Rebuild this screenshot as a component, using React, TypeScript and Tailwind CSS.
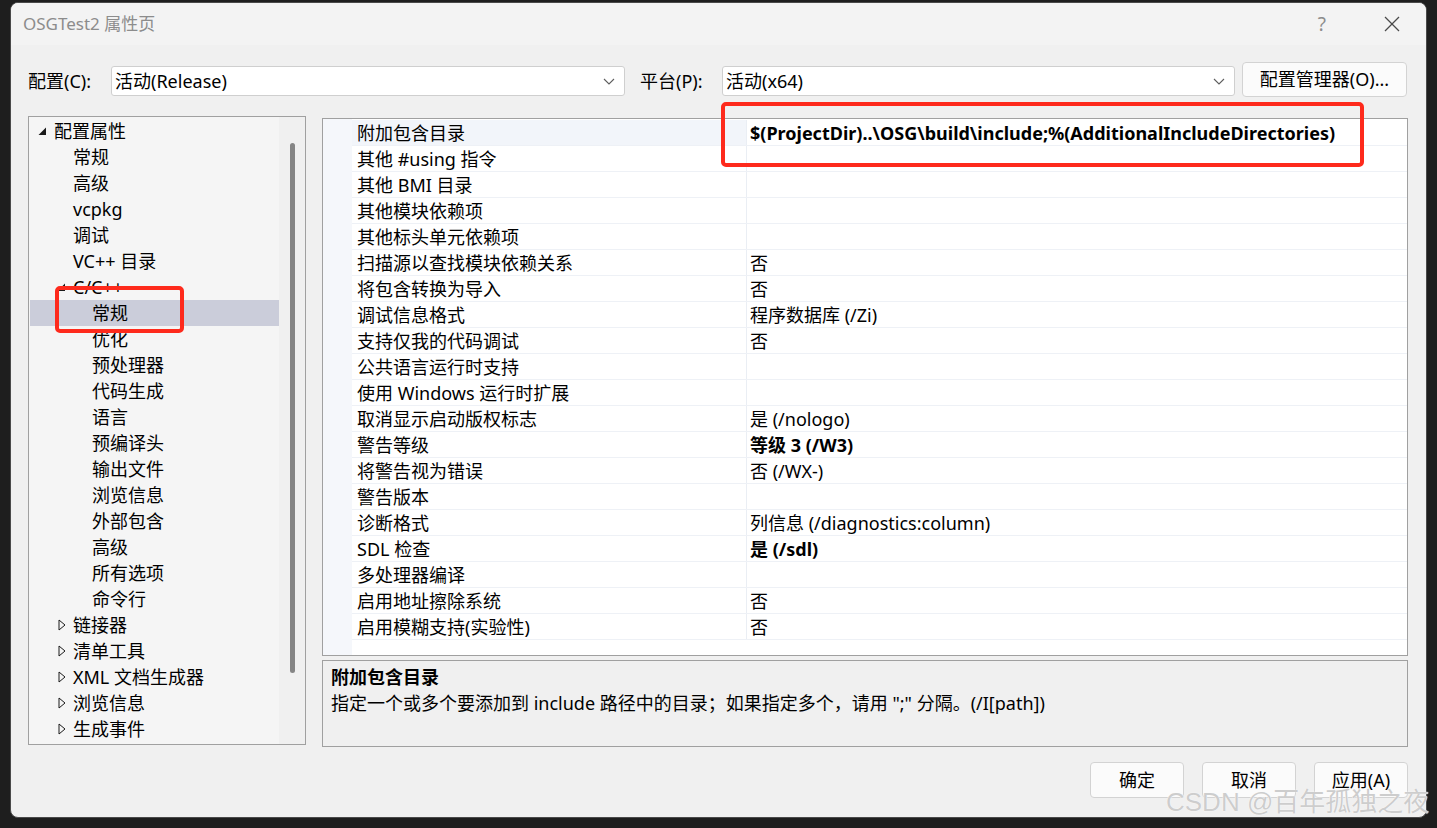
import React from "react";

type TreeItem = { label: string; level: number; arrow?: "open" | "closed"; selected?: boolean };

const tree: TreeItem[] = [
  { label: "配置属性", level: 0, arrow: "open" },
  { label: "常规", level: 1 },
  { label: "高级", level: 1 },
  { label: "vcpkg", level: 1 },
  { label: "调试", level: 1 },
  { label: "VC++ 目录", level: 1 },
  { label: "C/C++", level: 1, arrow: "open" },
  { label: "常规", level: 2, selected: true },
  { label: "优化", level: 2 },
  { label: "预处理器", level: 2 },
  { label: "代码生成", level: 2 },
  { label: "语言", level: 2 },
  { label: "预编译头", level: 2 },
  { label: "输出文件", level: 2 },
  { label: "浏览信息", level: 2 },
  { label: "外部包含", level: 2 },
  { label: "高级", level: 2 },
  { label: "所有选项", level: 2 },
  { label: "命令行", level: 2 },
  { label: "链接器", level: 1, arrow: "closed" },
  { label: "清单工具", level: 1, arrow: "closed" },
  { label: "XML 文档生成器", level: 1, arrow: "closed" },
  { label: "浏览信息", level: 1, arrow: "closed" },
  { label: "生成事件", level: 1, arrow: "closed" },
];

const props: { name: string; value: string; bold?: boolean }[] = [
  { name: "附加包含目录", value: "$(ProjectDir)..\\OSG\\build\\include;%(AdditionalIncludeDirectories)", bold: true },
  { name: "其他 #using 指令", value: "" },
  { name: "其他 BMI 目录", value: "" },
  { name: "其他模块依赖项", value: "" },
  { name: "其他标头单元依赖项", value: "" },
  { name: "扫描源以查找模块依赖关系", value: "否" },
  { name: "将包含转换为导入", value: "否" },
  { name: "调试信息格式", value: "程序数据库 (/Zi)" },
  { name: "支持仅我的代码调试", value: "否" },
  { name: "公共语言运行时支持", value: "" },
  { name: "使用 Windows 运行时扩展", value: "" },
  { name: "取消显示启动版权标志", value: "是 (/nologo)" },
  { name: "警告等级", value: "等级 3 (/W3)", bold: true },
  { name: "将警告视为错误", value: "否 (/WX-)" },
  { name: "警告版本", value: "" },
  { name: "诊断格式", value: "列信息 (/diagnostics:column)" },
  { name: "SDL 检查", value: "是 (/sdl)", bold: true },
  { name: "多处理器编译", value: "" },
  { name: "启用地址擦除系统", value: "否" },
  { name: "启用模糊支持(实验性)", value: "否" },
];

const indent = ["pl-[7px]", "pl-[26px]", "pl-[45px]"];

function Chevron() {
  return (
    <svg width="12" height="7" viewBox="0 0 12 7" className="shrink-0">
      <polyline points="1,1 6,6 11,1" fill="none" stroke="#5f5f5f" strokeWidth="1.1" />
    </svg>
  );
}

function Select({ value, w }: { value: string; w: string }) {
  return (
    <div className={`${w} h-[30px] mt-[4px] bg-white border border-[#cfcfcf] rounded-[3px] flex items-center pl-[3px] pr-[9px]`}>
      <span className="flex-1 leading-[28px]">{value}</span>
      <Chevron />
    </div>
  );
}

function Btn({ label, w, h }: { label: string; w: string; h: string }) {
  return (
    <div className={`${w} ${h} bg-[#fbfbfb] border border-[#d3d3d3] rounded-[4px] flex items-center justify-center`}>
      {label}
    </div>
  );
}

export default function App() {
  return (
    <div className="relative w-[1437px] h-[828px] overflow-hidden bg-[#1e1e1e] pl-[10px] pt-[2px] text-[18px] text-black font-['Noto_Sans','Noto_Sans_CJK_SC',sans-serif]">
      <div className="w-[1417px] h-[816px] bg-[#f0f0f0] border border-[#4a4a4a] rounded-[8px] overflow-hidden flex flex-col">
        {/* title bar */}
        <div className="h-[42px] bg-[#f3f3f3] flex items-center pl-[12px] pr-[26px] shrink-0">
          <span className="text-[#8c8c8c] text-[17px]">OSGTest2 属性页</span>
          <span className="ml-auto text-[#8c8c8c] text-[19px]">?</span>
          <svg width="16" height="16" viewBox="0 0 16 16" className="ml-[58px]">
            <line x1="1" y1="1" x2="15" y2="15" stroke="#4a4a4a" strokeWidth="1.2" />
            <line x1="15" y1="1" x2="1" y2="15" stroke="#4a4a4a" strokeWidth="1.2" />
          </svg>
        </div>

        {/* body */}
        <div className="flex-1 flex flex-col px-[17px] pt-[17px]">
          {/* config row */}
          <div className="flex items-start h-[35px]">
            <span className="w-[83px] mt-[4px] leading-[30px]">配置(C):</span>
            <Select value="活动(Release)" w="w-[514px]" />
            <span className="w-[82px] ml-[15px] mt-[4px] leading-[30px]">平台(P):</span>
            <Select value="活动(x64)" w="w-[513px]" />
            <div className="ml-[7px]">
              <Btn label="配置管理器(O)..." w="w-[165px]" h="h-[35px]" />
            </div>
          </div>

          {/* main area */}
          <div className="flex mt-[19px]">
            {/* tree */}
            <div className="w-[278px] h-[629px] border border-[#a0a0a0] bg-[#f5f5f5] flex">
              <div className="w-[250px] pt-[1px] pl-[1px]">
                {tree.map((t, i) => (
                  <div
                    key={i}
                    className={`h-[26px] flex items-center ${indent[t.level]} ${t.selected ? "bg-[#cbcdda]" : ""}`}
                  >
                    <span className="w-[17px] h-[26px] flex items-center shrink-0">
                      {t.arrow === "open" && (
                        <svg width="9" height="9" viewBox="0 0 9 9" className="ml-[1px]">
                          <polygon points="8,0.5 8,8 0.5,8" fill="#1a1a1a" />
                        </svg>
                      )}
                      {t.arrow === "closed" && (
                        <svg width="9" height="12" viewBox="0 0 9 12" className="ml-[2px]">
                          <polygon points="1,1 7,6 1,11" fill="none" stroke="#1a1a1a" strokeWidth="1" />
                        </svg>
                      )}
                    </span>
                    <span className="whitespace-nowrap leading-[26px]">{t.label}</span>
                  </div>
                ))}
              </div>
              <div className="flex-1 bg-[#f0f0f0] flex justify-center">
                <div className="w-[5px] h-[530px] mt-[26px] bg-[#858585] rounded-full" />
              </div>
            </div>

            {/* right column */}
            <div className="w-[1086px] ml-[16px] mt-[2px] flex flex-col">
              <div className="h-[538px] border border-[#a0a0a0] bg-white flex">
                <div className="w-[29px] bg-[#f5f7fb]" />
                <div className="flex-1 pt-[1px]">
                  {props.map((p, i) => (
                    <div key={i} className="h-[26px] flex border-b border-[#eef1f6]">
                      <div
                        className={`w-[394px] pl-[5px] leading-[26px] whitespace-nowrap ${i === 0 ? "bg-[#f2f5fa]" : ""}`}
                      >
                        {p.name}
                      </div>
                      <div
                        className={`flex-1 border-l border-[#eaeef4] pl-[3px] leading-[26px] whitespace-nowrap ${p.bold ? "font-bold" : ""}`}
                      >
                        {p.value}
                      </div>
                    </div>
                  ))}
                </div>
              </div>
              <div className="h-[87px] mt-[4px] border border-[#a0a0a0] bg-[#f0f0f0] pl-[8px] pt-[3px]">
                <div className="font-bold leading-[26px]">附加包含目录</div>
                <div className="leading-[26px]">指定一个或多个要添加到 include 路径中的目录；如果指定多个，请用 ";" 分隔。(/I[path])</div>
              </div>
            </div>
          </div>

          {/* bottom buttons */}
          <div className="flex justify-end gap-[18px] mt-[15px] pr-[1px]">
            <Btn label="确定" w="w-[94px]" h="h-[36px]" />
            <Btn label="取消" w="w-[94px]" h="h-[36px]" />
            <Btn label="应用(A)" w="w-[94px]" h="h-[36px]" />
          </div>
        </div>
      </div>

      {/* red annotation boxes */}
      <div className="absolute left-[721px] top-[102px] w-[643px] h-[65px] border-[4px] border-[#fe2a1c] rounded-[5px]" />
      <div className="absolute left-[55px] top-[286px] w-[129px] h-[47px] border-[4px] border-[#fe2a1c] rounded-[5px]" />

      {/* watermark */}
      <div className="absolute left-[1166px] top-[786px] text-[26px] leading-[32px] text-[#cdcdcd] whitespace-nowrap [text-shadow:0_0_1px_#ffffff,0_0_1px_#ffffff] font-['Liberation_Sans','Noto_Sans_CJK_SC',sans-serif]">
        CSDN @百年孤独之夜
      </div>
    </div>
  );
}
